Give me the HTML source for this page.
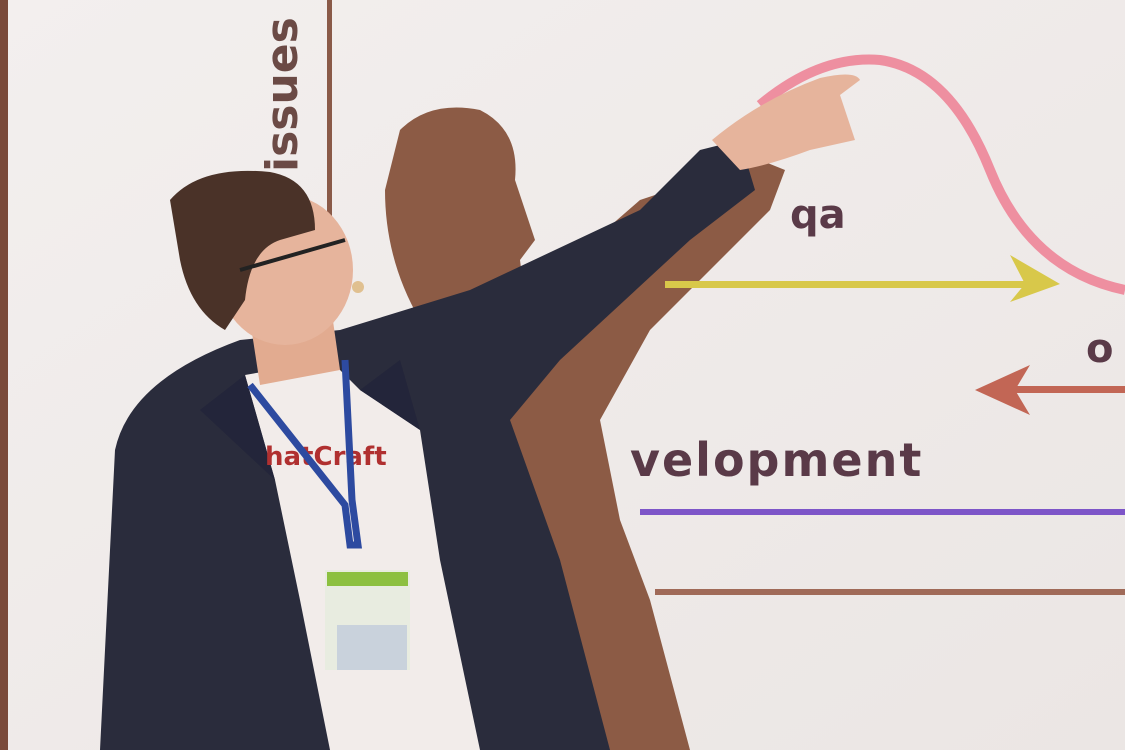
<!DOCTYPE html>
<html><head><meta charset="utf-8"><style>
html,body{margin:0;padding:0;width:1125px;height:750px;overflow:hidden;background:#efeae8}
svg{display:block}
text{font-family:"DejaVu Sans","Liberation Sans",sans-serif;font-weight:bold}
</style></head><body>
<svg width="1125" height="750" viewBox="0 0 1125 750" xmlns="http://www.w3.org/2000/svg">
<defs>
<linearGradient id="bg" x1="0" y1="0" x2="1" y2="1">
<stop offset="0" stop-color="#f3efee"/><stop offset="1" stop-color="#ebe6e4"/></linearGradient>
</defs>
<rect width="1125" height="750" fill="url(#bg)"/>
<rect x="0" y="0" width="8" height="750" fill="#7a4a3a"/>
<rect x="327" y="0" width="5" height="235" fill="#8a5a48"/>
<text transform="translate(297,172) rotate(-90)" font-size="44" fill="#6b4a45">issues</text>
<path d="M400,130 Q430,100 480,110 Q520,130 515,180 L535,240 L520,260 L525,300 L640,200 L760,160 L785,170 L770,210 L650,330 L600,420 L620,520 L650,600 L690,750 L560,750 L520,560 L460,450 L420,320 Q385,260 385,190 Z" fill="#8c5b45"/>
<path d="M760,105 Q820,55 880,60 Q950,70 990,170 Q1030,270 1125,290" fill="none" stroke="#ee8fa0" stroke-width="10"/>
<text x="790" y="228" font-size="40" fill="#5a3a48">qa</text>
<rect x="665" y="281" width="370" height="7" fill="#d8c84a"/>
<path d="M1010,255 L1060,284 L1010,302 L1025,284 Z" fill="#d8c84a"/>
<text x="1086" y="362" font-size="40" fill="#5a3a48">o</text>
<rect x="1010" y="386" width="115" height="7" fill="#c26655"/>
<path d="M1030,365 L975,390 L1030,415 L1015,390 Z" fill="#c26655"/>
<text x="630" y="476" font-size="46" letter-spacing="2" fill="#5a3a48">velopment</text>
<rect x="640" y="509" width="485" height="6" fill="#7d55c8"/>
<rect x="655" y="589" width="470" height="6" fill="#a06a58"/>
<path d="M340,330 L470,290 L640,210 L700,150 L740,140 L755,190 L690,240 L560,360 L510,420 L560,560 L610,750 L100,750 L115,450 Q130,380 240,340 Z" fill="#2a2c3c"/>
<path d="M712,140 Q760,100 820,78 Q855,70 860,80 L840,95 L855,140 L810,150 Q770,165 740,170 Z" fill="#e6b49c"/>
<path d="M245,375 L330,360 L360,390 L420,430 L440,560 L480,750 L330,750 L300,600 L275,480 Z" fill="#f2ecea"/>
<path d="M245,375 L200,410 L275,480 Z M360,390 L420,430 L400,360 Z" fill="#23253a"/>
<text x="265" y="465" font-size="26" fill="#b03030" font-family="Liberation Serif">hatCraft</text>
<path d="M250,385 L345,505 L350,545 L358,545 L352,500 L345,360" fill="none" stroke="#2d4aa0" stroke-width="7"/>
<rect x="325" y="570" width="85" height="100" fill="#e8ece0"/>
<rect x="327" y="572" width="81" height="14" fill="#8cc040"/>
<rect x="337" y="625" width="70" height="45" fill="#c9d2dc"/>
<path d="M250,320 L330,300 L340,370 L260,385 Z" fill="#e2ab90"/>
<ellipse cx="285" cy="270" rx="68" ry="75" fill="#e6b49c"/>
<path d="M170,200 Q200,165 270,172 Q315,180 315,230 L280,240 Q250,250 245,300 L225,330 Q190,310 180,260 Q175,230 170,200 Z" fill="#4a3228"/>
<path d="M240,270 L345,240" stroke="#222" stroke-width="4" fill="none"/>
<circle cx="358" cy="287" r="6" fill="#e0c090"/>
</svg>
</body></html>
